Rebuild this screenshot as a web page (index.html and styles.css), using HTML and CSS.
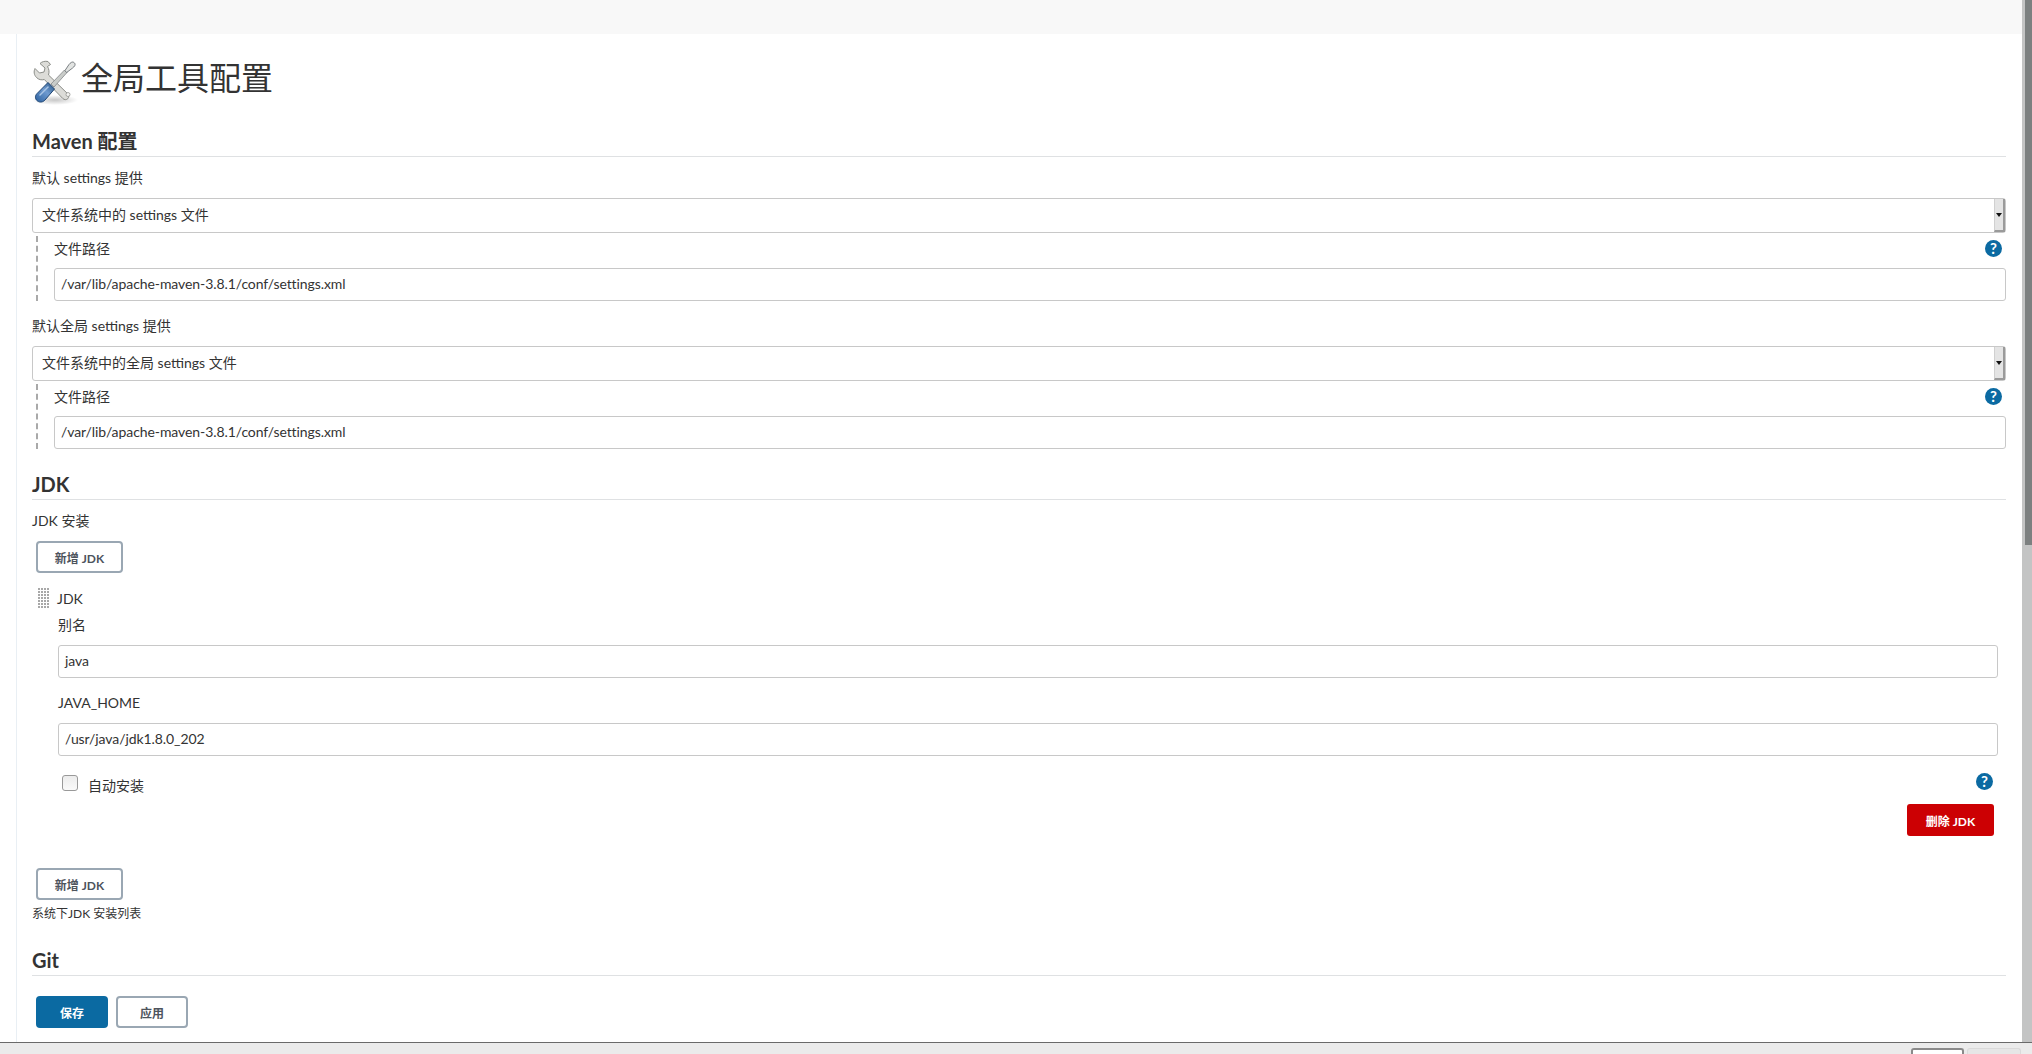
FILE: index.html
```html
<!DOCTYPE html>
<html lang="zh-CN">
<head>
<meta charset="utf-8">
<title>全局工具配置</title>
<link rel="stylesheet" href="styles.css">
</head>
<body>
<div class="window">
  <div class="viewport">
    <div class="page">
      <div class="topbar"></div>
      <div class="shell">
        <main class="main">
          <h1 class="title">
            <svg class="title-icon" viewBox="0 0 48 48" width="48" height="48" aria-hidden="true">
              <defs>
                <radialGradient id="sh" cx="50%" cy="50%" r="50%"><stop offset="0" stop-color="#000" stop-opacity=".22"/><stop offset="1" stop-color="#000" stop-opacity="0"/></radialGradient>
                <linearGradient id="blue" x1="0" y1="1" x2="1" y2="0"><stop offset="0" stop-color="#2a5f9e"/><stop offset=".55" stop-color="#6f9bd0"/><stop offset="1" stop-color="#24507f"/></linearGradient>
              </defs>
              <ellipse cx="23" cy="42" rx="23" ry="5" fill="url(#sh)"/>
              <path d="M16 3.500c-3-.6-6 0-8 2l5 4.500-1 4-4.500 1-4.500-4.500c-1.500 3-1 6.500 1.500 9 2.200 2.200 5 2.800 7.800 2l18.500 19c1.500 1.500 3.700 1.500 5 .2s1.300-3.500-.2-5L16.500 17c1-3 .5-6-1-8.500l3-2z" fill="#dcdcd8" stroke="#8b8d88" stroke-width="1"/>
              <circle cx="36" cy="36.500" r="2" fill="#f4f4f2" stroke="#8b8d88" stroke-width=".7"/>
              <path d="M19 26l13.500-14 2.500 2.500L22 29z" fill="#c9ccc9" stroke="#85888a" stroke-width=".8"/>
              <path d="M33 12.500l4-6c.5-.8 1.500-1.600 2.500-2.200 1-.5 2-.3 2.800.5s1 1.800.5 2.800c-.6 1-1.500 2-2.300 2.500l-6 4.500z" fill="#e2e4e2" stroke="#6b7075" stroke-width=".9"/>
              <path d="M16 24.500l6.500 6.500-9.500 11c-2 2.200-5 2.800-7.500 1-2.700-2-2.600-5.300-.6-7.300z" fill="url(#blue)" stroke="#1d4472" stroke-width="1"/>
              <path d="M8 37l8-8" stroke="#a9c5e6" stroke-width="1.500" fill="none" stroke-linecap="round"/>
            </svg>
            <span class="title-text">全局工具配置</span>
          </h1>

          <section class="section section-maven">
            <h2 class="section-head">Maven 配置</h2>
            <div class="label">默认 settings 提供</div>
            <div class="select"><span class="select-text">文件系统中的 settings 文件</span><span class="select-arrow"></span></div>
            <div class="nested">
              <div class="label-row">
                <span>文件路径</span>
                <span class="help">?</span>
              </div>
              <div class="input">/var/lib/apache-maven-3.8.1/conf/settings.xml</div>
            </div>
            <div class="label label-second">默认全局 settings 提供</div>
            <div class="select"><span class="select-text">文件系统中的全局 settings 文件</span><span class="select-arrow"></span></div>
            <div class="nested">
              <div class="label-row">
                <span>文件路径</span>
                <span class="help">?</span>
              </div>
              <div class="input">/var/lib/apache-maven-3.8.1/conf/settings.xml</div>
            </div>
          </section>

          <section class="section section-jdk">
            <h2 class="section-head">JDK</h2>
            <div class="label">JDK 安装</div>
            <button class="btn btn-outline btn-add">新增 JDK</button>
            <div class="repeat">
              <div class="repeat-head"><span class="grip"></span><span>JDK</span></div>
              <div class="repeat-body">
                <div class="field-label">别名</div>
                <div class="input">java</div>
                <div class="field-label field-gap">JAVA_HOME</div>
                <div class="input">/usr/java/jdk1.8.0_202</div>
                <div class="check-row">
                  <span class="checkbox"></span>
                  <span class="check-label">自动安装</span>
                  <span class="help help-check">?</span>
                </div>
                <div class="delete-row"><button class="btn btn-danger">删除 JDK</button></div>
              </div>
            </div>
            <button class="btn btn-outline btn-add">新增 JDK</button>
            <div class="hint">系统下JDK 安装列表</div>
          </section>

          <section class="section section-git">
            <h2 class="section-head">Git</h2>
          </section>

          <div class="actions">
            <button class="btn btn-primary">保存</button>
            <button class="btn btn-outline btn-apply">应用</button>
          </div>
        </main>
      </div>
    </div>
    <div class="scrollbar"><div class="scroll-thumb"></div></div>
  </div>
  <div class="statusbar">
    <span class="tab tab-active"></span>
    <span class="tab"></span>
  </div>
</div>
</body>
</html>
```
FILE: styles.css
```css
* { box-sizing: border-box; }
html, body { margin: 0; height: 100%; overflow: hidden; }
body {
  font-family: Lato, "Noto Sans CJK SC", sans-serif;
  font-size: 14px;
  color: #333;
  background: #fff;
}
.window { display: flex; flex-direction: column; height: 1054px; }
.viewport { display: flex; flex: 0 0 1042px; height: 1042px; }
.page { flex: 1; min-width: 0; display: flex; flex-direction: column; }
.scrollbar { flex: 0 0 10px; background: #c3c4c4; padding-left: 3px; }
.scroll-thumb { height: 545px; background: #7c8080; }
.topbar { flex: 0 0 34px; background: #f8f8f8; }
.shell { flex: 1; padding-left: 16px; }
.main {
  height: 100%;
  border-left: 1px solid #e9eff4;
  padding: 18px 16px 0 15px;
}
.title {
  display: flex;
  align-items: center;
  margin: 0;
  height: 50px;
  font-size: 32px;
  font-weight: 400;
  line-height: 50px;
}
.title-icon { flex: none; margin-right: 1px; margin-top: 10px; }
.title-text { margin-top: 1px; }
.section-head {
  margin: 0;
  height: 29px;
  line-height: 26px;
  font-size: 20px;
  font-weight: 700;
  border-bottom: 1px solid #dfe1e3;
}
.section-maven { margin-top: 26px; }
.label { height: 20px; line-height: 20px; margin-top: 11px; }
.label-second { margin-top: 15.5px; }
.select {
  display: flex;
  justify-content: space-between;
  height: 35px;
  margin-top: 10px;
  border: 1px solid #c8c8c8;
  border-radius: 3px;
  line-height: 32px;
  padding-left: 9px;
}
.select-arrow {
  position: relative;
  width: 11px;
  background: #e4e4e4;
  border-left: 1px solid #d0d0d0;
  border-right: 2px solid #9a9a9a;
  border-bottom: 2px solid #9a9a9a;
}
.select-arrow::after {
  content: "";
  position: absolute;
  left: 1px;
  top: 14px;
  border: 3px solid transparent;
  border-top: 4px solid #111;
  border-bottom: 0;
}
.nested {
  margin-left: 4px;
  padding-left: 16px;
  border-left: 2px dashed #a9a9a9;
  margin-top: 2.5px;
}
.label-row {
  display: flex;
  justify-content: space-between;
  align-items: center;
  height: 24px;
  line-height: 22px;
  padding: 2px 4px 0 0;
}
.help {
  display: inline-flex;
  align-items: center;
  justify-content: center;
  width: 17px;
  height: 17px;
  border-radius: 50%;
  background: #0b6aa2;
  color: #fff;
  font-size: 15px;
  font-weight: 700;
  line-height: 17px;
}
.input {
  height: 33px;
  margin-top: 8px;
  border: 1px solid #c8c8c8;
  border-radius: 3px;
  padding-left: 6px;
  line-height: 29px;
  letter-spacing: -0.08px;
}
.section-jdk { margin-top: 22.5px; }
.btn {
  display: block;
  font-family: inherit;
  font-size: 12px;
  font-weight: 700;
  border-radius: 3px;
  padding: 0;
  cursor: pointer;
}
.btn-outline {
  background: #fff;
  color: #4d545d;
  border: 2px solid #9aa7b3;
  border-radius: 4px;
}
.btn-add { width: 87px; height: 32px; margin-left: 4px; }
.btn-add:first-of-type { margin-top: 10px; }
.repeat { margin-top: 13px; }
.repeat-head { display: flex; align-items: center; height: 24px; padding-left: 6px; }
.grip {
  width: 12px;
  height: 21px;
  margin-right: 7px;
  background-image: radial-gradient(circle at 1px 1px, #a8a8a8 0.8px, transparent 1px);
  background-size: 3px 3px;
}
.repeat-body { padding: 0 8px 0 26px; }
.field-label { height: 20px; line-height: 20px; margin-top: 5px; }
.repeat-body .input { margin-top: 10px; }
.field-gap { margin-top: 15px; }
.check-row { display: flex; align-items: center; height: 24px; margin-top: 15px; padding-left: 4px; }
.checkbox {
  width: 16px;
  height: 16px;
  border: 1px solid #999;
  border-radius: 3px;
  background: linear-gradient(#ececec, #fafafa);
}
.check-label { margin-left: 10px; margin-top: 3px; }
.help-check { margin-left: auto; margin-right: 5px; margin-top: -3px; }
.delete-row { display: flex; justify-content: flex-end; padding-right: 4px; margin-top: 9px; }
.btn-danger {
  width: 87px;
  height: 32px;
  background: #cc0003;
  border: 0;
  color: #fff;
}
.repeat + .btn-add { margin-top: 32px; }
.hint { font-size: 12px; line-height: 16px; margin-top: 6px; }
.section-git { margin-top: 25px; }
.actions { display: flex; gap: 8px; margin-top: 20px; padding-left: 4px; }
.btn-primary {
  width: 72px;
  height: 32px;
  background: #0b6aa2;
  color: #fff;
  border: 0;
  border-radius: 4px;
}
.btn-apply { width: 72px; height: 32px; }
.statusbar {
  flex: 0 0 12px;
  background: #ebebeb;
  border-top: 1px solid #6a6a6a;
  display: flex;
  justify-content: flex-end;
  align-items: flex-start;
  gap: 3px;
  padding: 5px 11px 0 0;
}
.tab {
  width: 54px;
  height: 7px;
  border: 1px solid #dadada;
  border-bottom: 0;
  border-radius: 3px 3px 0 0;
  background: #e6e6e6;
}
.tab-active {
  width: 53px;
  border: 2px solid #8a8a8a;
  border-bottom: 0;
  background: #fff;
}
```
